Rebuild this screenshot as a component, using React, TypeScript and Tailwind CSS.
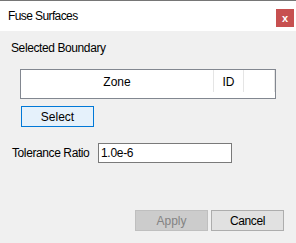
export default function App() {
  const ui = { fontFamily: '"Liberation Sans", Arial, sans-serif' }

  return (
    <div className="w-[296px] h-[243px] bg-[#f0f0f0] border-t border-[#767676] text-black overflow-hidden" style={ui}>
      {/* title bar */}
      <div className="h-[30px] bg-white flex items-start justify-between pl-2 pr-[2px]">
        <span className="mt-[7px] text-[12px] leading-4 tracking-[-0.6px]">Fuse Surfaces</span>
        <button className="mt-[8px] w-[18px] h-[18px] bg-[#c75050] text-white text-[11px] font-bold leading-none flex items-center justify-center">
          x
        </button>
      </div>

      <div className="flex flex-col">
        <div className="mt-[9px] ml-[11px] text-[12px] leading-4 tracking-[-0.4px]">Selected Boundary</div>

        {/* list view */}
        <div className="mt-[13px] ml-[20px] w-[256px] h-[30px] bg-white border border-[#828790]">
          <div className="flex h-[22px] text-[12px]">
            <div className="w-[193px] border-r border-[#e5e5e5] flex items-center justify-center pt-[2px]">Zone</div>
            <div className="w-[30px] border-r border-[#e5e5e5] flex items-center justify-center pt-[2px]">ID</div>
            <div className="flex-1 border-r border-[#e5e5e5]" />
          </div>
        </div>

        <button className="mt-[7px] ml-[21px] w-[73px] h-[21px] bg-[#e5f1fb] border border-[#0078d7] text-[12px] leading-none flex items-center justify-center">
          Select
        </button>

        <div className="mt-[16px] flex items-center">
          <span className="ml-[12px] w-[86px] text-[12px] leading-4 tracking-[-0.4px]">Tolerance Ratio</span>
          <div className="w-[134px] h-[20px] bg-white border border-[#7a7a7a] flex items-center pl-[2px] text-[12px] tracking-[-0.3px]">
            1.0e-6
          </div>
        </div>

        <div className="mt-[47px] flex justify-end gap-[3px] pr-[12px]">
          <button className="w-[73px] h-[21px] bg-[#cccccc] border border-[#bfbfbf] text-[#838383] text-[12px] leading-none flex items-center justify-center">
            Apply
          </button>
          <button className="w-[73px] h-[21px] bg-[#e1e1e1] border border-[#adadad] text-[12px] leading-none tracking-[-0.4px] flex items-center justify-center">
            Cancel
          </button>
        </div>
      </div>
    </div>
  )
}
